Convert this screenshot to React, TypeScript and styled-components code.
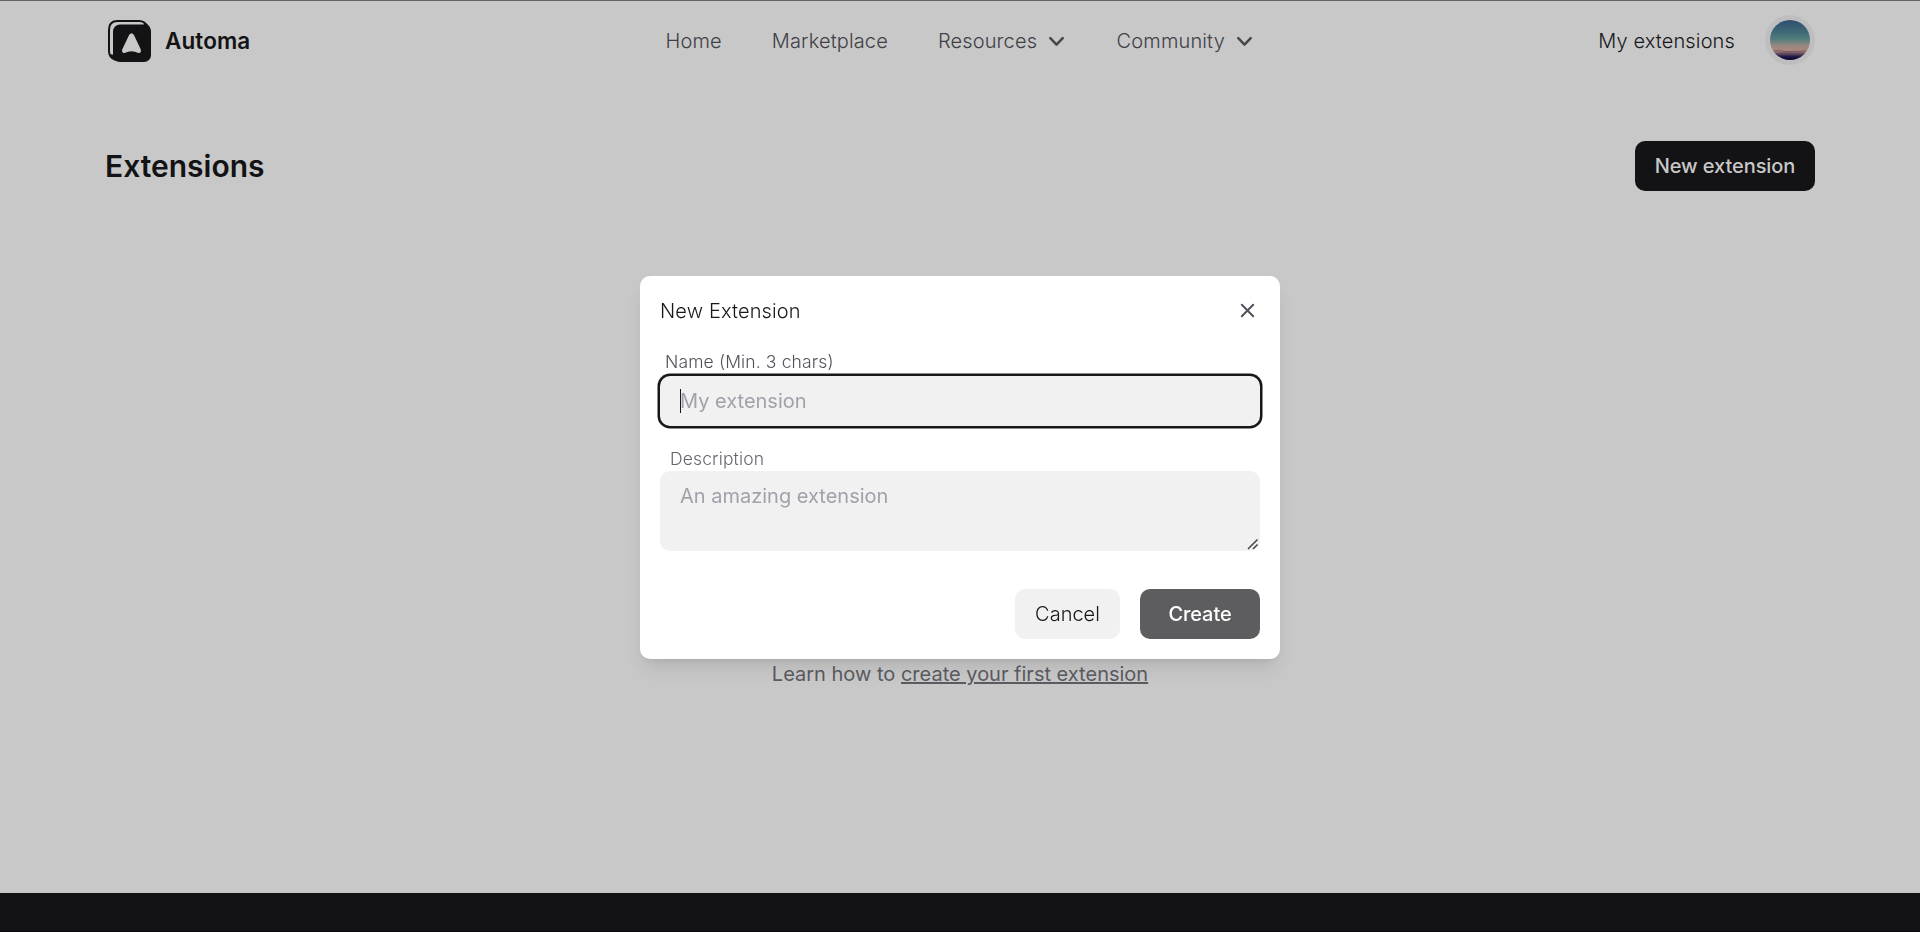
import React from 'react';
import styled, { createGlobalStyle } from 'styled-components';

const GlobalStyle = createGlobalStyle`
  *, *::before, *::after { box-sizing: border-box; }
  body {
    margin: 0;
    background: #c8c8c8;
    color: #18181b;
    font: 300 20px/30px Inter, 'Liberation Sans', sans-serif;
    letter-spacing: 0.14px;
    overflow: hidden;
  }
  button, input, textarea { font: inherit; border: 0; outline: 0; }
`;

const Page = styled.div`
  height: 932px;
  display: flex;
  flex-direction: column;
  border-top: 1px solid #646264;
`;

const Container = styled.div`
  width: 1710px;
  margin: 0 auto;
`;

const Header = styled(Container)`
  display: grid;
  grid-template-columns: 1fr auto 1fr;
  align-items: center;
  height: 80px;
`;

const Brand = styled.a`
  display: flex;
  align-items: center;
  gap: 14px;
  padding-left: 3px;
  font-size: 22.5px;
  font-weight: 600;
  letter-spacing: 0.1px;
  color: #131315;
`;

const Nav = styled.nav`
  display: flex;
  gap: 50px;
  color: #404046;
`;

const NavItem = styled.a`
  display: flex;
  align-items: center;
  gap: 7px;
  svg { margin-right: -2.5px; }
`;

const Account = styled.div`
  display: flex;
  align-items: center;
  justify-content: flex-end;
  gap: 30px;
`;

const Avatar = styled.div`
  width: 50px;
  height: 50px;
  padding: 5px;
  border-radius: 50%;
  background: #bebec0;
  margin-top: -2px;
  svg { display: block; border-radius: 50%; }
`;

const Main = styled(Container)`
  flex: 1;
  padding-top: 60px;
  display: flex;
  flex-direction: column;
`;

const TitleRow = styled.div`
  display: flex;
  align-items: center;
  justify-content: space-between;
`;

const Title = styled.h1`
  margin: 0;
  font-size: 30px;
  line-height: 40px;
  font-weight: 600;
  letter-spacing: 0;
  color: #131315;
`;

const Button = styled.button<{ $variant: 'dark' | 'muted' | 'plain'; $width: number }>`
  width: ${p => p.$width}px;
  height: 50px;
  padding: 0;
  border-radius: 10px;
  font-weight: ${p => (p.$variant === 'plain' ? 300 : 500)};
  letter-spacing: ${p => (p.$variant === 'plain' ? 0 : -0.08)}px;
  color: ${p => ({ dark: '#c8c8c8', muted: '#fff', plain: '#18181b' })[p.$variant]};
  background: ${p => ({ dark: '#131315', muted: '#5d5d5f', plain: '#f1f1f1' })[p.$variant]};
`;

const Hint = styled.p`
  margin: 468px 0 0;
  text-align: center;
  font-weight: 400;
  letter-spacing: 0;
  color: #5b5b62;
  a { text-decoration: underline; }
`;

const Footer = styled.footer`
  height: 39px;
  background: #131315;
  border-bottom: 1px solid #0b060d;
`;

const Overlay = styled.div`
  position: fixed;
  inset: 0;
  display: flex;
  justify-content: center;
  align-items: flex-start;
  padding-top: 276px;
`;

const Dialog = styled.section`
  width: 640px;
  height: 383px;
  padding: 20px;
  border-radius: 10px;
  background: #fff;
  box-shadow: 0 12px 19px -4px rgba(0, 0, 0, 0.1), 0 5px 8px -5px rgba(0, 0, 0, 0.1);
`;

const DialogHead = styled.div`
  display: flex;
  align-items: center;
  justify-content: space-between;
  height: 30px;
  svg { display: block; margin-top: -1px; }
`;

const Label = styled.label<{ $top: number; $inset: number; $tone: string }>`
  display: block;
  margin-top: ${p => p.$top}px;
  padding-left: ${p => p.$inset}px;
  font-size: 17.5px;
  line-height: 25px;
  color: ${p => p.$tone};
`;

const Field = styled.div<{ $top?: number }>`
  position: relative;
  margin-top: ${p => p.$top ?? 0}px;
`;

const Input = styled.input`
  display: block;
  width: 100%;
  height: 50px;
  padding: 0 20px;
  border-radius: 10px;
  background: #f1f1f1;
  box-shadow: 0 0 0 2.5px #18181b;
  &::placeholder { color: #a1a1aa; opacity: 1; font-weight: 400; }
`;

const Caret = styled.span`
  position: absolute;
  left: 20px;
  top: 13px;
  width: 1px;
  height: 24px;
  background: #18181b;
`;

const TextArea = styled.textarea`
  display: block;
  width: 100%;
  height: 80px;
  padding: 10px 20px;
  border-radius: 10px;
  background: #f1f1f1;
  resize: none;
  &::placeholder { color: #a1a1aa; opacity: 1; font-weight: 400; }
`;

const Grip = styled.svg`
  position: absolute;
  right: 1px;
  bottom: 1px;
`;

const Actions = styled.div`
  display: flex;
  justify-content: flex-end;
  gap: 20px;
  margin-top: 38px;
`;

const Logo = () => (
  <svg width="43" height="42" viewBox="0 0 43 42">
    <path d="M39 7 Q37.5 1 31 1 H9.5 Q1 1 1 9.5 V31 Q1 37.5 7 39.5" fill="none" stroke="#131315" strokeWidth="2" />
    <path d="M35.5 2.2 Q40.5 3.5 42.3 8.5 L36 6Z M2 34 Q3.5 40 9.5 41.6 L6 35Z" fill="#131315" />
    <rect x="5" y="4.5" width="38" height="37.5" rx="7" fill="#131315" />
    <path d="M21.2 14.8 Q23.5 11.6 25.8 14.8 L32.8 29.5 Q33.6 33.4 30.3 32.9 Q23.5 29.6 16.7 32.9 Q13.4 33.4 14.2 29.5Z" fill="#c8c8c8" />
  </svg>
);

const Chevron = () => (
  <svg width="25" height="25" viewBox="0 0 25 25" fill="none" stroke="#46464c" strokeWidth="2.5" strokeLinecap="round" strokeLinejoin="round">
    <path d="M6.3 9.2 L12.5 15.6 L18.7 9.2" />
  </svg>
);

const Sunset = () => (
  <svg width="40" height="40" viewBox="0 0 40 40">
    <defs>
      <linearGradient id="sky" x1="0" y1="0" x2="0" y2="1">
        <stop offset="0" stopColor="#2f4f70" />
        <stop offset="0.25" stopColor="#3a6474" />
        <stop offset="0.48" stopColor="#527d7c" />
        <stop offset="0.64" stopColor="#958880" />
        <stop offset="0.76" stopColor="#ad877d" />
        <stop offset="0.84" stopColor="#67505f" />
        <stop offset="0.92" stopColor="#1d1440" />
        <stop offset="1" stopColor="#0c0635" />
      </linearGradient>
    </defs>
    <rect width="40" height="40" fill="url(#sky)" />
    <path d="M4 30.5h7l3 1h6M19 32l6-.8h6l5-.8M9 33.5h12l4 .7h9" stroke="#5a4359" strokeOpacity=".5" fill="none" />
  </svg>
);

export default function App() {
  return (
    <>
      <GlobalStyle />
      <Page>
        <Header as="header">
          <Brand><Logo />Automa</Brand>
          <Nav>
            <NavItem>Home</NavItem>
            <NavItem>Marketplace</NavItem>
            <NavItem>Resources<Chevron /></NavItem>
            <NavItem>Community<Chevron /></NavItem>
          </Nav>
          <Account>
            My extensions
            <Avatar><Sunset /></Avatar>
          </Account>
        </Header>
        <Main as="main">
          <TitleRow>
            <Title>Extensions</Title>
            <Button $variant="dark" $width={180}>New extension</Button>
          </TitleRow>
          <Hint>Learn how to <a>create your first extension</a></Hint>
        </Main>
        <Footer />
      </Page>
      <Overlay>
        <Dialog role="dialog">
          <DialogHead>
            New Extension
            <svg width="25" height="25" viewBox="0 0 25 25" stroke="#52525b" strokeWidth="2" strokeLinecap="round">
              <path d="M6.8 6.8 L18.2 18.2 M18.2 6.8 L6.8 18.2" />
            </svg>
          </DialogHead>
          <Label $top={23} $inset={5} $tone="#52525b">Name (Min. 3 chars)</Label>
          <Field $top={2}>
            <Input placeholder="My extension" />
            <Caret />
          </Field>
          <Label $top={20} $inset={10} $tone="#66666f">Description</Label>
          <Field>
            <TextArea placeholder="An amazing extension" />
            <Grip width="12" height="12" viewBox="0 0 12 12" stroke="#444" strokeWidth="1.5">
              <path d="M1 11 L10.5 1.5 M6 11 L10.5 6.5" />
            </Grip>
          </Field>
          <Actions>
            <Button $variant="plain" $width={105}>Cancel</Button>
            <Button $variant="muted" $width={120}>Create</Button>
          </Actions>
        </Dialog>
      </Overlay>
    </>
  );
}
